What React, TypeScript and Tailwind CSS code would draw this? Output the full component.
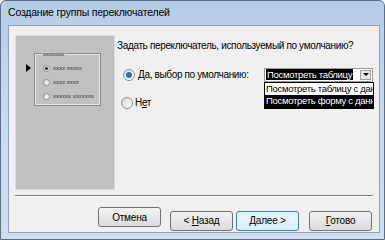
import React from 'react';

const font = { fontFamily: '"Liberation Sans", Arial, sans-serif' };

const Radio = ({ checked, small }: { checked?: boolean; small?: boolean }) => (
  <span
    className={`${small ? 'w-[7px] h-[7px]' : 'w-[12px] h-[12px]'} rounded-full border border-[#8e8f8f] bg-gradient-to-br from-[#d8d8d8] to-white flex items-center justify-center shrink-0`}
  >
    {checked && <span className={`${small ? 'w-[3px] h-[3px] bg-[#222]' : 'w-[6px] h-[6px] bg-[#2f6fb8]'} rounded-full`} />}
  </span>
);

const Btn = ({ children, active }: { children: React.ReactNode; active?: boolean }) => (
  <button
    className={`w-[63px] h-[20px] rounded-[3px] border ${active ? 'border-[#3c7fb1] from-[#eaf6fd] to-[#d9f0fc]' : 'border-[#707070] from-[#f2f2f2] to-[#dcdcdc]'} bg-gradient-to-b text-[10px] tracking-[-0.2px] text-black`}
  >
    {children}
  </button>
);

export default function App() {
  return (
    <div className="w-[385px] h-[240px] bg-gradient-to-b from-[#b6cde6] via-[#c9dbee] to-[#cfdff0] border border-[#5b6f87] rounded-t-[6px] flex flex-col overflow-hidden" style={font}>
      <div className="h-[24px] flex items-center pl-[7px] text-[10.5px] tracking-[-0.2px] text-black">Создание группы переключателей</div>
      <div className="flex-1 ml-[7px] mr-[4px] mb-[6px] bg-[#f0f0f0] border border-[#8ea3bb] flex flex-col">
        <div className="flex h-[169px]">
          {/* preview panel */}
          <div className="ml-[6px] mt-[9px] w-[100px] h-[155px] bg-[#c0c0c0] border border-[#dcdcdc] pt-[18px] pl-[10px] shrink-0">
            <div className="flex items-start">
              <span className="mt-[10px] w-0 h-0 border-y-[4px] border-y-transparent border-l-[5px] border-l-black" />
              <div className="ml-[4px] w-[65px] h-[51px] border border-[#e6e6e6] outline outline-1 outline-[#8a8a8a] relative">
                <span className="absolute -top-[5px] left-[6px] bg-[#c0c0c0] px-[1px] text-[6px] leading-[8px] text-[#333]">xxxxxxx</span>
                <div className="flex flex-col gap-[7px] pt-[10px] pl-[7px] text-[6px] leading-[7px] text-[#333]">
                  <div className="flex items-center gap-[3px]"><Radio small checked />xxxx xxxxx</div>
                  <div className="flex items-center gap-[3px]"><Radio small />xxxx xxxx</div>
                  <div className="flex items-center gap-[3px]"><Radio small />xxxxxx xxxxxxx</div>
                </div>
              </div>
            </div>
          </div>
          {/* options */}
          <div className="flex-1 pl-[2px] pt-[14px] text-[10px] tracking-[-0.35px] text-black whitespace-nowrap">
            <div className="leading-[12px]">Задать переключатель, используемый по умолчанию?</div>
            <div className="flex items-center mt-[15px] ml-[6px]">
              <Radio checked />
              <span className="ml-[3px] w-[126px]"><u>Д</u>а, выбор по умолчанию:</span>
              <div className="relative">
                <div className="w-[109px] h-[14px] bg-white border border-[#9a9a9a] flex items-center pl-[1px]">
                  <span className="bg-black text-white px-[1px] leading-[11px] text-[9.5px] tracking-[-0.3px]">Посмотреть таблицу</span>
                  <span className="ml-auto mr-[1px] w-[11px] h-[10px] bg-[#e8e8e8] border border-[#a0a0a0] flex items-center justify-center">
                    <span className="w-0 h-0 border-x-[3px] border-x-transparent border-t-[3px] border-t-black" />
                  </span>
                </div>
                <div className="absolute left-0 top-[14px] w-[110px] bg-white border border-black text-[9.5px] tracking-[-0.3px] leading-[12.5px] overflow-hidden whitespace-nowrap">
                  <div className="pl-[1px]">Посмотреть таблицу с данными</div>
                  <div className="pl-[1px] bg-black text-white">Посмотреть форму с данными</div>
                </div>
              </div>
            </div>
            <div className="flex items-center mt-[13px] ml-[4px]">
              <Radio />
              <span className="ml-[2px]">Н<u>е</u>т</span>
            </div>
          </div>
        </div>
        <div className="mx-[6px] h-[2px] border-t border-[#7a7a7a] border-b border-b-white" />
        <div className="flex justify-end pr-[7px] pt-[10px]">
          <Btn>Отмена</Btn>
          <div className="ml-[9px]"><Btn>&lt; <u>Н</u>азад</Btn></div>
          <div className="ml-[3px]"><Btn active><u>Д</u>алее &gt;</Btn></div>
          <div className="ml-[10px]"><Btn><u>Г</u>отово</Btn></div>
        </div>
      </div>
    </div>
  );
}
